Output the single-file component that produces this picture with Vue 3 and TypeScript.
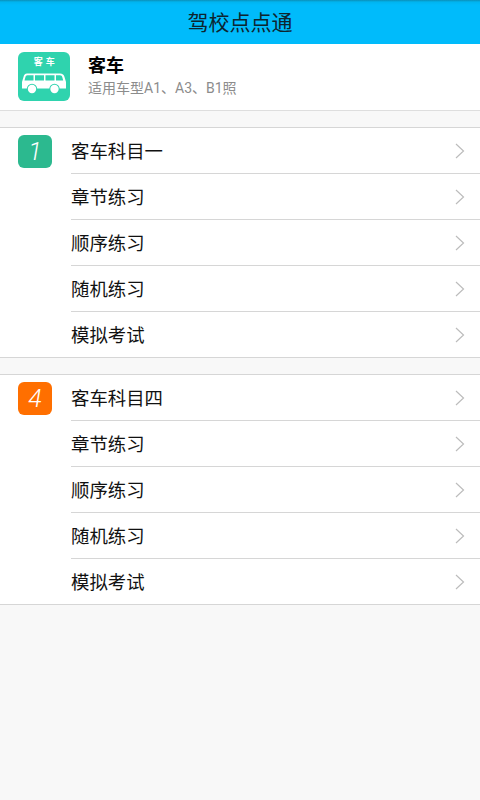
<script setup lang="ts">
interface Section { badge: string; tone: string; title: string }
const sections: Section[] = [
  { badge: '1', tone: 'green', title: '客车科目一' },
  { badge: '4', tone: 'orange', title: '客车科目四' },
]
const items = ['章节练习', '顺序练习', '随机练习', '模拟考试']
</script>

<template>
  <div class="page">
    <header class="bar">驾校点点通</header>
    <div class="hero">
      <div class="logo">
        <span class="logo-text">客 车</span>
        <svg class="bus" width="46" height="21" viewBox="0 0 46 21">
          <path d="M6 0.500H39C41.500 0.500 43 2 43.500 4L45 9V15.500H1V9L2.500 4C3 2 4 0.500 6 0.500Z" fill="#fff" />
          <path d="M6.500 2.200H12.500V7.500H3.500L4.300 4.500C4.700 3 5.200 2.200 6.500 2.200ZM14 2.200H23V7.500H14ZM24.500 2.200H33.500V7.500H24.500ZM35 2.200H39C40.300 2.200 41 3 41.400 4.500L42.200 7.500H35Z" fill="#2fd3ae" />
          <circle cx="11" cy="16" r="5.200" fill="#2fd3ae" />
          <circle cx="11" cy="16" r="4.200" fill="#fff" />
          <circle cx="33.500" cy="16" r="5.200" fill="#2fd3ae" />
          <circle cx="33.500" cy="16" r="4.200" fill="#fff" />
        </svg>
      </div>
      <div class="hero-text">
        <div class="hero-title">客车</div>
        <div class="hero-sub">适用车型A1、A3、B1照</div>
      </div>
    </div>

    <section v-for="s in sections" :key="s.badge" class="section">
      <div class="row">
        <span class="badge" :class="s.tone">{{ s.badge }}</span>
        <div class="row-body">
          <span>{{ s.title }}</span>
          <svg width="10" height="16" viewBox="0 0 10 16"><path d="M1 1L8.500 8L1 15" fill="none" stroke="#bcbcbc" stroke-width="1.200" /></svg>
        </div>
      </div>
      <div v-for="item in items" :key="item" class="row">
        <div class="row-body">
          <span class="label">{{ item }}</span>
          <svg width="10" height="16" viewBox="0 0 10 16"><path d="M1 1L8.500 8L1 15" fill="none" stroke="#bcbcbc" stroke-width="1.200" /></svg>
        </div>
      </div>
    </section>
  </div>
</template>

<style>
html, body { margin: 0; background: #f8f8f8; }
</style>

<style scoped>
.page {
  width: 480px;
  height: 800px;
  overflow: hidden;
  background: #f8f8f8;
  font-family: "Roboto", "Noto Sans CJK SC", sans-serif;
}
.bar {
  height: 44px;
  box-sizing: border-box;
  background: linear-gradient(#0b8fb8 0, #00b4ef 2px, #00bbfb 5px, #00bbfb 100%);
  color: #0d2530;
  font-size: 21px;
  line-height: 47px;
  text-align: center;
}
.hero {
  height: 67px;
  box-sizing: border-box;
  display: flex;
  align-items: flex-start;
  padding: 8px 18px 0;
  background: #fff;
  border-bottom: 1px solid #dedede;
}
.logo {
  width: 52px;
  height: 49px;
  border-radius: 6px;
  background: #2fd3ae;
  display: flex;
  flex-direction: column;
  align-items: center;
  flex: none;
}
.logo-text {
  color: #fff;
  font-size: 9px;
  line-height: 10px;
  margin-top: 5px;
  margin-left: 1px;
  font-weight: 700;
  letter-spacing: 0.5px;
  white-space: pre;
}
.bus { margin-top: 6px; }
.hero-text { margin-left: 18px; }
.hero-title {
  font-size: 18px;
  font-weight: 700;
  line-height: 24px;
  margin-top: 2px;
  color: #000;
}
.hero-sub {
  font-size: 14px;
  line-height: 20px;
  color: #8c8c8c;
}
.section {
  margin-top: 16px;
  background: #fff;
  border-top: 1px solid #d6d6d6;
  border-bottom: 1px solid #d6d6d6;
}
.row {
  position: relative;
  padding-left: 71px;
}
.row-body {
  height: 46px;
  box-sizing: border-box;
  display: flex;
  align-items: center;
  justify-content: space-between;
  padding-right: 15px;
  font-size: 18.4px;
  color: #111;
  border-bottom: 1px solid #d6d6d6;
}
.row-body span {
  position: relative;
  top: -1px;
}
.row:last-child .row-body {
  height: 45px;
  border-bottom: 0;
}
.badge {
  position: absolute;
  left: 18px;
  top: 6.5px;
  width: 34px;
  height: 33px;
  border-radius: 6px;
  color: #fff;
  font-style: italic;
  font-weight: 300;
  font-size: 25px;
  line-height: 33px;
  text-align: center;
}
.green { background: #2cb98f; }
.orange { background: #ff6f00; }
</style>
